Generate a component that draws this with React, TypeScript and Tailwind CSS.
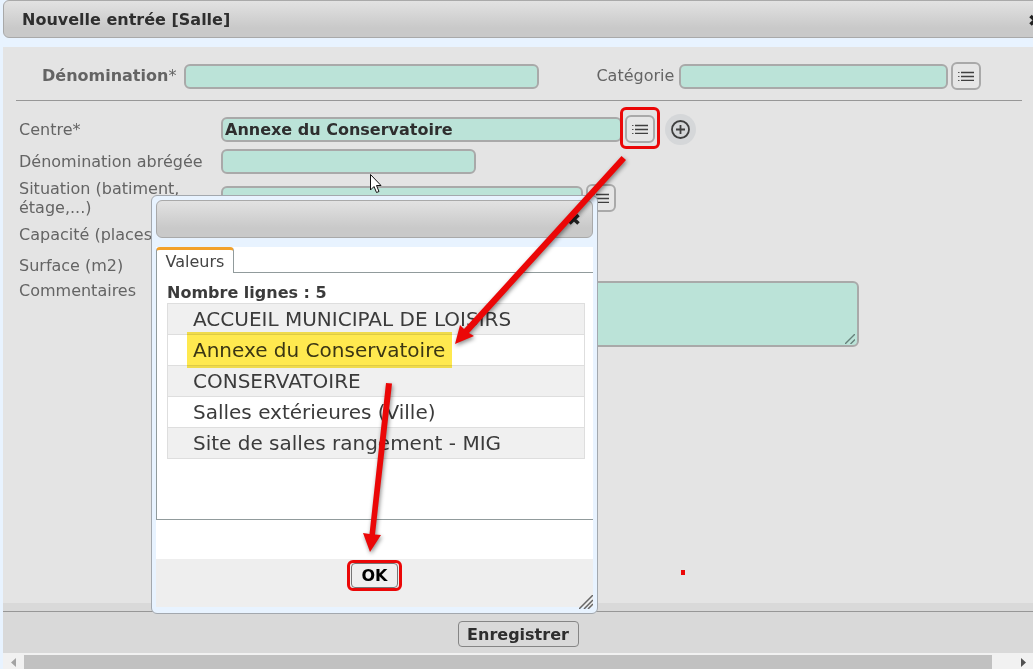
import { useState } from "react";
import type { ReactNode } from "react";
import clsx from "clsx";

const ROOMS = [
  "ACCUEIL MUNICIPAL DE LOISIRS",
  "Annexe du Conservatoire",
  "CONSERVATOIRE",
  "Salles extérieures (Ville)",
  "Site de salles rangement - MIG",
];

const FIELD =
  "h-[25px] min-w-0 rounded-md border-2 border-[#a9a9a9] bg-[#bbe3d8] px-0.5 text-base font-bold text-[#2e2e2e] outline-none";

function ListButton({ label }: { label: string }) {
  return (
    <button
      type="button"
      aria-label={label}
      className="flex h-7 w-[30px] shrink-0 items-center justify-center rounded-md border-2 border-[#a9a9a9] bg-[#e6e6e6]"
    >
      <svg width="16" height="10" viewBox="0 0 16 10" aria-hidden>
        <path d="M0 1.500h1.500M0 5.500h1.500M0 9.500h1.500" stroke="#555" />
        <path d="M3 1.500h13M3 5.500h13M3 9.500h13" stroke="#3f3f3f" strokeWidth="1.3" />
      </svg>
    </button>
  );
}

function CloseIcon() {
  return (
    <svg width="14" height="14" viewBox="0 0 14 14" aria-hidden>
      <path d="M2.500 3l9 8.500M11.500 3l-9 8.500" stroke="#222" strokeWidth="3.600" />
    </svg>
  );
}

function FormRow({ id, label, className, children }: { id: string; label: ReactNode; className: string; children: ReactNode }) {
  return (
    <div className={clsx("flex", className)}>
      <label htmlFor={id} className="w-[202px] shrink-0 leading-[19px]">
        {label}
      </label>
      {children}
    </div>
  );
}

/** Value picker opened from the list button of the "Centre" field. */
function ValuesDialog({ onSelect }: { onSelect: (room: string) => void }) {
  return (
    <div
      role="dialog"
      aria-label="Valeurs"
      className="absolute top-[195px] left-[151px] w-[447px] rounded-md border border-[#a3a8ae] bg-[#e8f3ff] px-1 pt-1 pb-1.5"
    >
      <div className="flex h-[38px] items-center justify-end rounded-md border border-[#a9a9a9] bg-linear-to-b from-[#e2e2e2] to-[#c9c9c9] to-75% pr-[11px]">
        <button type="button" aria-label="Fermer">
          <CloseIcon />
        </button>
      </div>

      <div className="mt-[9px] bg-white pb-[39px]">
        <div role="tablist" className="flex">
          <button
            type="button"
            role="tab"
            aria-selected
            className="h-[26px] w-[78px] rounded-t border-x border-t-3 border-x-[#919b9c] border-t-[#f2a12c] text-base leading-6 text-[#444]"
          >
            Valeurs
          </button>
          <div className="flex-1 border-b border-[#919b9c]" />
        </div>
        <div role="tabpanel" className="h-[247px] border-b border-l border-[#919b9c] pt-2.5 pr-2 pl-2.5">
          <p className="text-base leading-5 font-bold text-[#3b3b3b]">Nombre lignes : 5</p>
          <table className="w-full border-collapse border border-[#dedede] text-xl leading-[30px] text-[#3b3b3b]">
            <tbody>
              {ROOMS.map((room) => (
                <tr key={room} className="h-[31px] border-b border-[#dedede] odd:bg-[#f0f0f0]">
                  <td className="p-0 pl-[25px] whitespace-nowrap">
                    <button type="button" onClick={() => onSelect(room)}>
                      {room}
                    </button>
                  </td>
                </tr>
              ))}
            </tbody>
          </table>
        </div>
      </div>

      <div className="relative flex h-12 items-start justify-center bg-[#eee] pt-1">
        <button
          type="button"
          className="h-[25px] w-[47px] rounded-sm border border-[#767676] bg-[#efefef] text-base leading-6 font-bold text-black"
        >
          OK
        </button>
        <svg className="absolute right-0 -bottom-0.5" width="14" height="14" viewBox="0 0 14 14" aria-hidden>
          <path d="M0 14L14 0M5 14l9-9M9 14l5-5" stroke="#666" strokeWidth="1.500" />
        </svg>
      </div>
    </div>
  );
}

/** Red arrows, frames and highlighter showing the order of the steps. */
function Annotations() {
  return (
    <div className="pointer-events-none absolute inset-0" aria-hidden>
      <div className="absolute top-[332px] left-[187px] h-9 w-[265px] bg-[#ffe94f] mix-blend-multiply" />
      <div className="absolute top-[107px] left-[620px] h-[42px] w-10 rounded-md border-3 border-[#eb0707]" />
      <div className="absolute top-[560px] left-[347px] h-[31px] w-[55px] rounded-md border-3 border-[#eb0707]" />
      <div className="absolute top-[570px] left-[681px] h-[5px] w-1 bg-[#eb0707]" />
      <svg className="absolute top-0 left-0 drop-shadow-[1px_2px_2px_rgba(0,0,0,0.45)]" width="700" height="620" viewBox="0 0 700 620">
        <g fill="#eb0707">
          <path d="M621.500 156L464 329L460 325L455 344L474 336L469 333L626 160Z" />
          <path d="M386 383L369.500 534L363 533L370 552L381 535L375 534.500L392 383.500Z" />
        </g>
      </svg>
      <svg className="absolute top-[173px] left-[369px]" width="14" height="21" viewBox="0 0 14 21">
        <path d="M1.500 1.500v15.500l3.500-3.500 2.500 6 2.500-1-2.500-6h4.500z" fill="#fff" stroke="#111" />
      </svg>
    </div>
  );
}

export default function App() {
  const [center, setCenter] = useState("Annexe du Conservatoire");

  return (
    <div className="relative flex min-h-screen flex-col overflow-hidden bg-[#e8f3ff] pl-[3px] font-['DejaVu_Sans',Verdana,sans-serif] text-base text-[#646464]">
      <header className="-mr-5 flex h-[38px] shrink-0 items-center justify-between rounded-md border border-[#a9a9a9] bg-linear-to-b from-[#e2e2e2] to-[#c9c9c9] to-75% pt-0.5 pr-2.5 pl-[18px]">
        <h1 className="font-bold text-[#2e2e2e]">Nouvelle entrée [Salle]</h1>
        <button type="button" aria-label="Fermer">
          <CloseIcon />
        </button>
      </header>

      <main className="mt-[9px] flex-1 bg-[#e4e4e4] pt-[15px] pr-[11px] pl-[13px]">
        <div className="flex h-7 items-center pr-[41px] pl-[26px]">
          <label htmlFor="name" className="w-[142px] shrink-0 whitespace-nowrap">
            <b>Dénomination</b>*
          </label>
          <input id="name" className={clsx(FIELD, "flex-4")} />
          <label htmlFor="category" className="ml-[57px] w-[83px] shrink-0">
            Catégorie
          </label>
          <input id="category" className={clsx(FIELD, "mr-[3px] flex-3")} />
          <ListButton label="Choisir une catégorie" />
        </div>
        <hr className="mt-2.5 border-[#979797]" />

        <form className="pt-3 pl-[3px]">
          <FormRow id="center" label="Centre*" className="h-8 items-center">
            <input id="center" value={center} onChange={(e) => setCenter(e.target.value)} className={clsx(FIELD, "w-[401px]")} />
            <div className="ml-[3px] flex items-center gap-2.5">
              <ListButton label="Choisir un centre" />
              <button type="button" aria-label="Ajouter un centre" className="flex size-[31px] items-center justify-center rounded-full bg-[#d5d7d9]">
                <svg width="19" height="19" viewBox="0 0 19 19" fill="none" stroke="#3f3f3f" strokeWidth="1.800" aria-hidden>
                  <circle cx="9.500" cy="9.500" r="8.500" />
                  <path d="M9.500 5v9M5 9.500h9" />
                </svg>
              </button>
            </div>
          </FormRow>
          <FormRow id="short-name" label="Dénomination abrégée" className="h-[33px] items-center">
            <input id="short-name" className={clsx(FIELD, "w-[255px]")} />
          </FormRow>
          <FormRow id="location" label={<>Situation (batiment,<br />étage,...)</>} className="h-10 items-center">
            <input id="location" className={clsx(FIELD, "mr-[3px] w-[362px]")} />
            <ListButton label="Choisir une situation" />
          </FormRow>
          <FormRow id="capacity" label="Capacité (places)" className="h-8 items-center">
            <input id="capacity" className={clsx(FIELD, "w-24")} />
          </FormRow>
          <FormRow id="area" label="Surface (m2)" className="h-[31px] items-center">
            <input id="area" className={clsx(FIELD, "w-24")} />
          </FormRow>
          <FormRow id="comments" label="Commentaires" className="items-start">
            <div className="relative flex">
              <textarea id="comments" className="h-[66px] w-[638px] resize-none rounded-md border-2 border-[#a9a9a9] bg-[#bbe3d8] outline-none" />
              <svg className="absolute right-1 bottom-[3px]" width="10" height="10" viewBox="0 0 10 10" stroke="#66807a" strokeWidth="1.400" aria-hidden>
                <path d="M0 10L10 0M5.500 10L10 5.500" />
              </svg>
            </div>
          </FormRow>
        </form>
      </main>

      <footer className="h-[50px] shrink-0 bg-[#d9d9d9] pt-2">
        <div className="flex justify-center border-t border-[#979797] pt-[9px]">
          <button type="button" className="h-[26px] w-[121px] rounded-sm border border-[#858585] leading-[26px] font-bold text-[#2e2e2e]">
            Enregistrer
          </button>
        </div>
      </footer>

      <div className="flex h-4 shrink-0 items-center justify-between bg-[#f1f1f1] pt-0.5 pr-[7px] pl-2">
        <svg width="5" height="9" viewBox="0 0 5 9" aria-hidden>
          <path d="M5 0v9L0 4.500z" fill="#a3a3a3" />
        </svg>
        <div className="mr-[29px] ml-2 h-3.5 flex-1 bg-[#c1c1c1]" />
        <svg width="5" height="9" viewBox="0 0 5 9" aria-hidden>
          <path d="M0 0v9l5-4.500z" fill="#505050" />
        </svg>
      </div>

      <ValuesDialog onSelect={setCenter} />
      <Annotations />
    </div>
  );
}
